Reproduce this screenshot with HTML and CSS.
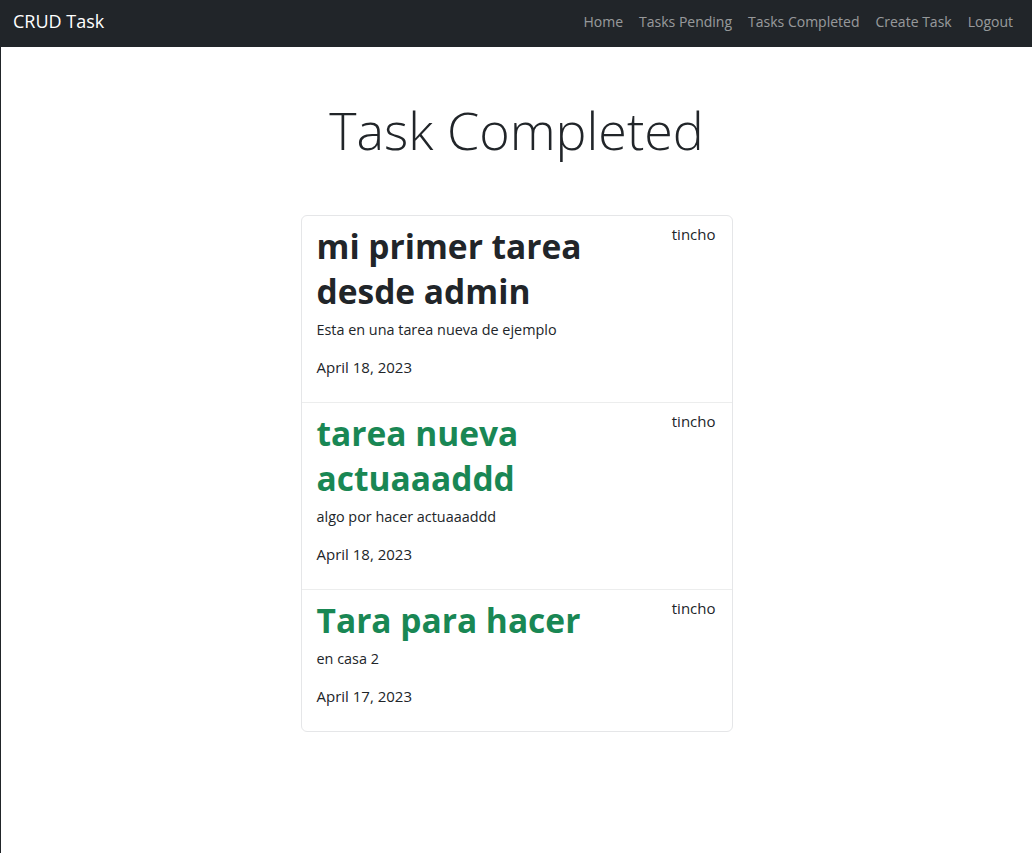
FILE: index.html
```html
<!DOCTYPE html>
<html lang="es">
<head>
<meta charset="utf-8">
<title>CRUD Task</title>
<link rel="stylesheet" href="styles.css">
</head>
<body>
<div class="frame">
  <nav class="navbar">
    <a class="brand" href="#">CRUD Task</a>
    <ul class="nav">
      <li><a href="#">Home</a></li>
      <li><a href="#">Tasks Pending</a></li>
      <li><a href="#">Tasks Completed</a></li>
      <li><a href="#">Create Task</a></li>
      <li><a href="#">Logout</a></li>
    </ul>
  </nav>
  <main class="main">
    <h1 class="page-title">Task Completed</h1>
    <ul class="card">
      <li class="item">
        <div class="item-head">
          <h2 class="task-title">mi primer tarea desde admin</h2>
          <span class="user">tincho</span>
        </div>
        <p class="desc">Esta en una tarea nueva de ejemplo</p>
        <p class="date">April 18, 2023</p>
      </li>
      <li class="item">
        <div class="item-head">
          <h2 class="task-title success">tarea nueva actuaaaddd</h2>
          <span class="user">tincho</span>
        </div>
        <p class="desc">algo por hacer actuaaaddd</p>
        <p class="date">April 18, 2023</p>
      </li>
      <li class="item">
        <div class="item-head">
          <h2 class="task-title success">Tara para hacer</h2>
          <span class="user">tincho</span>
        </div>
        <p class="desc">en casa 2</p>
        <p class="date">April 17, 2023</p>
      </li>
    </ul>
  </main>
</div>
</body>
</html>
```
FILE: styles.css
```css
* { box-sizing: border-box; }
html, body { margin: 0; padding: 0; }
body {
  font-family: "Open Sans", "Noto Sans", sans-serif;
  font-size: 16px;
  line-height: 1.5;
  color: #212529;
  background: #fff;
}
.frame {
  min-height: 853px;
  border-left: 1px solid #212529;
}
.navbar {
  height: 47px;
  background: #212529;
  display: flex;
  align-items: center;
  justify-content: space-between;
  padding: 0 12px 5px;
}
.brand {
  color: #fff;
  text-decoration: none;
  font-size: 18px;
  line-height: 1;
}
.nav {
  list-style: none;
  margin: 0;
  padding: 0;
  display: flex;
}
.nav a {
  display: block;
  padding: 0 8px;
  color: rgba(255, 255, 255, 0.55);
  text-decoration: none;
  font-size: 14px;
}
.nav li:last-child a { padding-right: 7px; }
.main {
  padding-top: 48px;
  display: flex;
  flex-direction: column;
  align-items: center;
}
.page-title {
  margin: 0 0 50px;
  font-size: 52px;
  font-weight: 300;
  line-height: 70px;
  text-align: center;
}
.card {
  list-style: none;
  margin: 0;
  padding: 0;
  width: 432px;
  border: 1px solid #e5e6e8;
  border-radius: 6px;
}
.item {
  padding: 6px 15px 8px 15px;
  border-top: 1px solid #eceded;
}
.item:first-child { border-top: 0; }
.item-head {
  display: flex;
  justify-content: space-between;
  align-items: flex-start;
}
.task-title {
  margin: 0 0 5px;
  padding-top: 2px;
  width: 340px;
  font-size: 33.5px;
  font-weight: 700;
  line-height: 45px;
}
.success { color: #198754; }
.user {
  margin-right: 1px;
  font-size: 15px;
  line-height: 24px;
}
.desc {
  margin: 0 0 15px;
  font-size: 14.4px;
  line-height: 21px;
}
.date {
  margin: 0 0 15px;
  font-size: 15px;
  line-height: 24px;
}
```
